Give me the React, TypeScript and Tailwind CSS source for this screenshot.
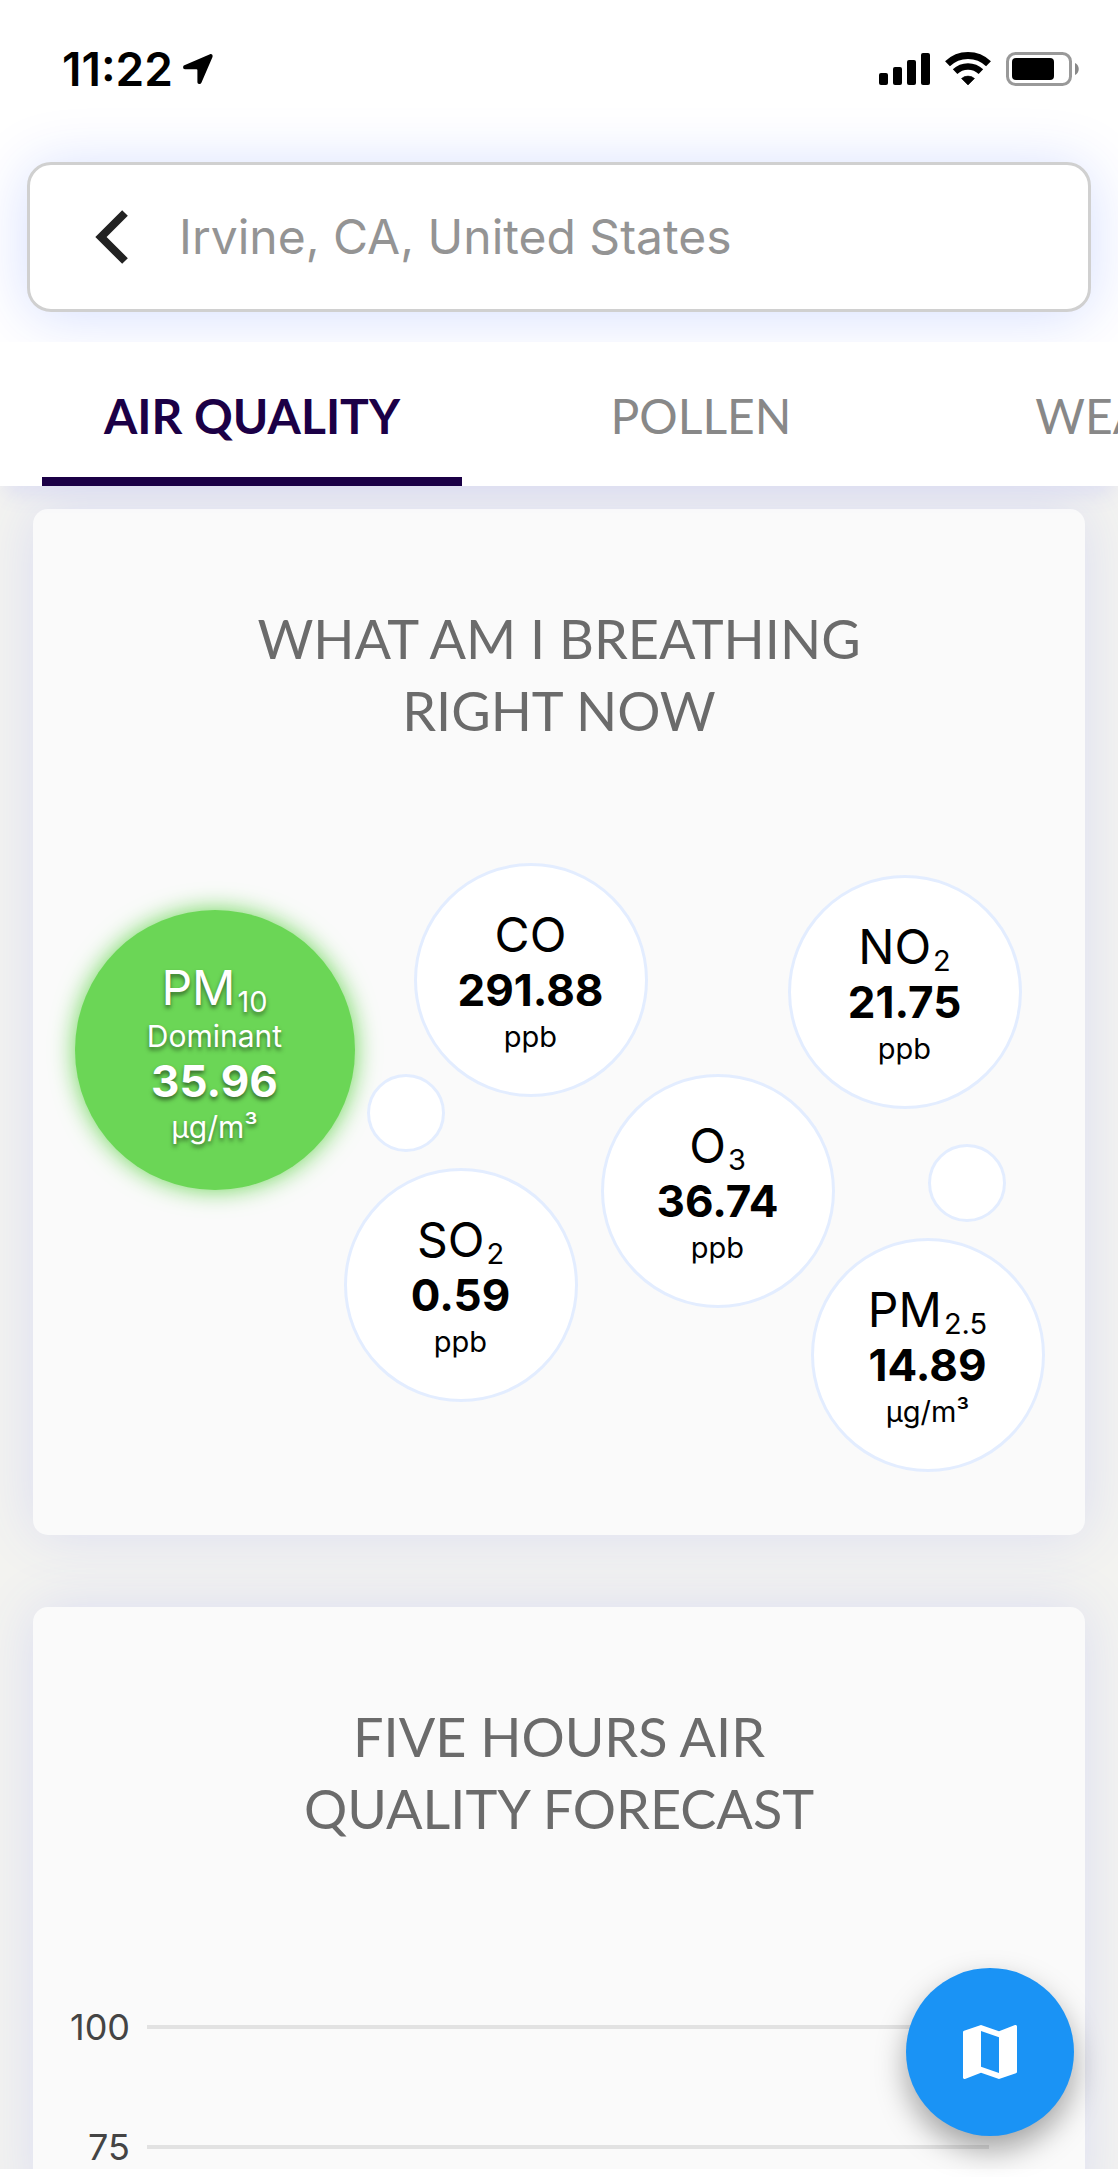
import React from "react";
import { MdMap } from "react-icons/md";

type Reading = {
  name: string;
  sub?: string;
  value: string;
  unit: string;
  place: string;
};

const readings: Reading[] = [
  { name: "CO", value: "291.88", unit: "ppb", place: "left-[339px] top-0" },
  { name: "NO", sub: "2", value: "21.75", unit: "ppb", place: "left-[713px] top-[12px]" },
  { name: "O", sub: "3", value: "36.74", unit: "ppb", place: "left-[526px] top-[211px]" },
  { name: "SO", sub: "2", value: "0.59", unit: "ppb", place: "left-[269px] top-[305px]" },
  { name: "PM", sub: "2.5", value: "14.89", unit: "µg/m³", place: "left-[736px] top-[375px]" },
];

const ticks = ["100", "75"];

function StatusBar() {
  return (
    <div className="flex h-[162px] items-start justify-between pt-[45px] pr-[39px] pl-[62px]">
      <div className="flex items-center gap-[10px]">
        <span className="text-[46px] leading-[48px] font-semibold text-black">11:22</span>
        <svg className="h-[30px] w-[30px]" viewBox="0 0 30 30" aria-hidden="true">
          <path
            d="M27 .2 1.4 11.2C-.5 12-.3 15.300 2 15.300H13.500a.9.9 0 0 1 .9.9V28c0 2.400 3 2.700 4 .7L29.400 3.200C30.200 1.300 28.800-.5 27 .2Z"
            fill="#000"
          />
        </svg>
      </div>
      <div className="flex items-center gap-[15px] pt-[7px]">
        <svg className="h-[34px] w-[51px]" viewBox="0 0 51 34" aria-hidden="true">
          <rect x="0" y="21" width="9" height="12" rx="2" />
          <rect x="14" y="15" width="9" height="18" rx="2" />
          <rect x="28" y="8" width="9" height="25" rx="2" />
          <rect x="42" y="1" width="9" height="32" rx="2" />
        </svg>
        <svg className="h-[34px] w-[46px]" viewBox="0 0 46 34" aria-hidden="true">
          <path d="M2.500 11.800a29.500 29.500 0 0 1 41 0" fill="none" stroke="#000" strokeWidth="7" />
          <path d="M10.100 19.700a18.500 18.500 0 0 1 25.800 0" fill="none" stroke="#000" strokeWidth="6.500" />
          <path d="M16.500 26.500a10 10 0 0 1 13 0L23 33Z" stroke="#000" strokeWidth=".6" strokeLinejoin="round" />
        </svg>
        <svg className="h-[34px] w-[73px]" viewBox="0 0 73 34" aria-hidden="true">
          <rect x="1.500" y="1.500" width="63" height="31" rx="8" fill="none" stroke="#999" strokeWidth="3" />
          <rect x="6" y="6" width="42" height="22" rx="4" />
          <path d="M69 11c5 2 5 10 0 12Z" fill="#888" />
        </svg>
      </div>
    </div>
  );
}

function SearchBar() {
  return (
    <div className="mx-[27px] flex h-[150px] items-center rounded-[24px] border-3 border-[#d0d0d0] bg-white pl-[65px] shadow-[0_4px_60px_rgba(0,60,255,0.17)]">
      <button type="button" aria-label="Back" className="mr-[51px] shrink-0">
        <svg className="h-[54px] w-[33px]" viewBox="0 0 33 54" fill="none" stroke="#222" strokeWidth="8" aria-hidden="true">
          <path d="M30 3 6 27l24 24" />
        </svg>
      </button>
      <input
        type="text"
        aria-label="Location"
        defaultValue="Irvine, CA, United States"
        className="h-full min-w-0 flex-1 bg-transparent pb-0.5 text-[48px] text-[#949494] outline-none"
      />
    </div>
  );
}

function Tabs() {
  const base = "h-full w-[420px] shrink-0 border-b-9 pt-3 text-center font-['Lato',sans-serif] text-[48px]";
  return (
    <nav className="relative flex h-[144px] gap-[29px] overflow-hidden bg-white pl-[42px] shadow-[0_14px_20px_-6px_rgba(80,90,255,0.12)]">
      <button type="button" aria-current="page" className={`${base} border-[#1b0046] font-bold text-[#1b0046]`}>
        AIR QUALITY
      </button>
      <button type="button" className={`${base} border-transparent text-[#888]`}>
        POLLEN
      </button>
      <button type="button" className={`${base} border-transparent text-[#888]`}>
        WEATHER
      </button>
    </nav>
  );
}

function CardTitle({ lines }: { lines: [string, string] }) {
  return (
    <h2 className="text-center font-['Lato',sans-serif] text-[54px] leading-[72px] text-[#6b6b6b]">
      {lines[0]}
      <br />
      {lines[1]}
    </h2>
  );
}

function Bubble({ name, sub, value, unit, place }: Reading) {
  return (
    <li
      className={`absolute flex h-[234px] w-[234px] flex-col items-center justify-center rounded-full border-3 border-[#e3edff] bg-white pt-1 text-black ${place}`}
    >
      <span className="text-[48px] leading-[56px]">
        {name}
        {sub && <sub className="ml-0.5 text-[29px]">{sub}</sub>}
      </span>
      <span className="text-[44px] leading-[54px] font-bold">{value}</span>
      <span className="text-[29px] leading-[40px]">{unit}</span>
    </li>
  );
}

function Breathing() {
  return (
    <section className="rounded-[15px] bg-[#fafafa] pt-[94px] pb-[64px] shadow-[0_0_56px_rgba(80,90,255,0.14)]">
      <CardTitle lines={["WHAT AM I BREATHING", "RIGHT NOW"]} />
      <ul className="relative mx-auto mt-[116px] h-[608px] w-[969px]">
        <li className="absolute top-[47px] left-0 flex h-[280px] w-[280px] flex-col items-center justify-center rounded-full bg-[#6bd656] pt-2 text-white shadow-[0_0_24px_#6bd656] [text-shadow:0_3px_4px_rgba(0,0,0,0.5)]">
          <span className="text-[48px] leading-[56px]">
            PM<sub className="ml-0.5 text-[29px]">10</sub>
          </span>
          <span className="text-[30px] leading-[40px]">Dominant</span>
          <span className="text-[44px] leading-[50px] font-bold">35.96</span>
          <span className="text-[30px] leading-[42px]">µg/m³</span>
        </li>
        {readings.map((r) => (
          <Bubble key={r.name + r.sub} {...r} />
        ))}
        <li aria-hidden="true" className="absolute top-[211px] left-[292px] h-[78px] w-[78px] rounded-full border-3 border-[#e3edff] bg-white" />
        <li aria-hidden="true" className="absolute top-[281px] left-[853px] h-[78px] w-[78px] rounded-full border-3 border-[#e3edff] bg-white" />
      </ul>
    </section>
  );
}

function Forecast() {
  return (
    <section className="mt-[72px] rounded-t-[15px] bg-[#fafafa] pt-[94px] shadow-[0_0_56px_rgba(80,90,255,0.14)]">
      <CardTitle lines={["FIVE HOURS AIR", "QUALITY FORECAST"]} />
      <div className="mt-[122px] pr-[96px] pl-[37px]">
        {ticks.map((t) => (
          <div key={t} className="flex h-[120px] items-center gap-[17px]">
            <span className="w-[60px] text-right text-[36px] leading-[40px] text-[#444]">{t}</span>
            <span className="h-1 flex-1 bg-[#e2e2e2]" />
          </div>
        ))}
      </div>
    </section>
  );
}

export default function App() {
  return (
    <div className="flex h-screen flex-col overflow-hidden bg-white pb-2 font-['Inter',sans-serif]">
      <header className="relative z-10 shrink-0">
        <StatusBar />
        <SearchBar />
        <div className="mt-[30px]">
          <Tabs />
        </div>
      </header>
      <main className="min-h-0 flex-1 overflow-hidden bg-[#f3f3f0] px-[33px] pt-[23px]">
        <Breathing />
        <Forecast />
      </main>
      <button
        type="button"
        aria-label="Open map"
        className="fixed right-[44px] bottom-[41px] flex h-[168px] w-[168px] items-center justify-center rounded-full bg-[#1a93f5] text-white shadow-[0_14px_30px_rgba(0,0,0,0.35)]"
      >
        <MdMap className="h-[72px] w-[72px]" />
      </button>
    </div>
  );
}
